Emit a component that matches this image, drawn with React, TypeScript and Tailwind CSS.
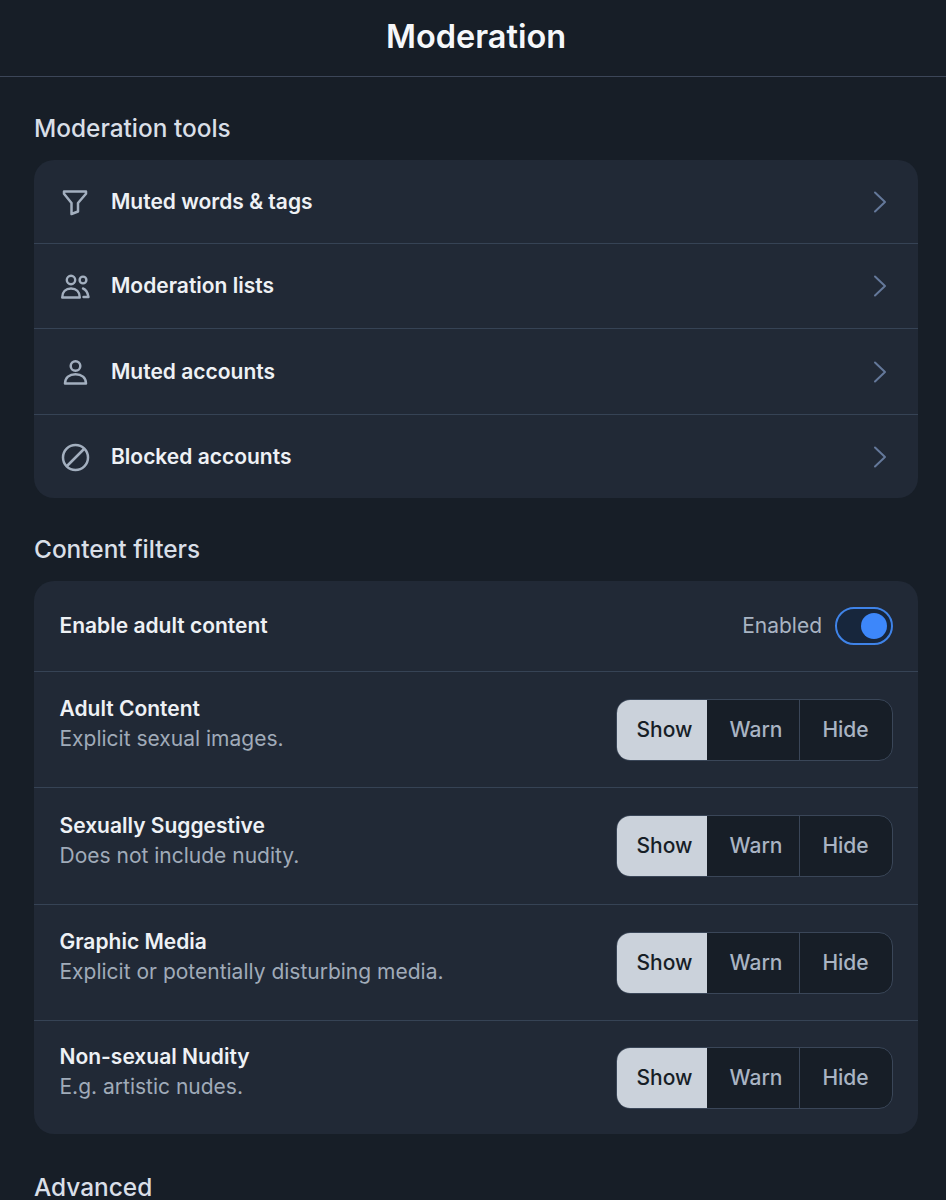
const font = "font-['Inter',sans-serif]";

function FilterIcon() {
  return (
    <svg viewBox="0 0 30 30" className="w-[30px] h-[30px]" fill="none" stroke="#a3afbf" strokeWidth="2.5" strokeLinejoin="round">
      <path d="M4 4.500h22v2.200l-8 9.300v8.500l-6.500 2.500V16L4 6.700z" />
    </svg>
  );
}

function UsersIcon() {
  return (
    <svg viewBox="0 0 30 30" className="w-[30px] h-[30px]" fill="none" stroke="#a3afbf" strokeWidth="2.4" strokeLinejoin="round" strokeLinecap="round">
      <circle cx="11" cy="9" r="4.200" />
      <circle cx="23" cy="9" r="3.400" />
      <path d="M2.200 26.500c0-5.600 3.600-9 8.800-9s8.800 3.400 8.800 9z" />
      <path d="M23 17.500c3 1 4.800 4.500 5.500 8.500h-5" />
    </svg>
  );
}

function PersonIcon() {
  return (
    <svg viewBox="0 0 30 30" className="w-[30px] h-[30px]" fill="none" stroke="#a3afbf" strokeWidth="2.500" strokeLinejoin="round">
      <circle cx="15.500" cy="9" r="4.800" />
      <path d="M5 26.500c0-5.800 4.400-9.300 10.500-9.300s10.500 3.500 10.500 9.300z" />
    </svg>
  );
}

function BlockIcon() {
  return (
    <svg viewBox="0 0 30 30" className="w-[30px] h-[30px]" fill="none" stroke="#a3afbf" strokeWidth="2.500" strokeLinecap="round">
      <circle cx="15.500" cy="15.500" r="12.500" />
      <path d="M7 24L24 7" />
    </svg>
  );
}

function Chevron() {
  return (
    <svg viewBox="0 0 16 24" className="w-4 h-6" fill="none" stroke="#64789a" strokeWidth="2" strokeLinecap="round" strokeLinejoin="round">
      <path d="M3 2.500l10 9.500L3 21.500" />
    </svg>
  );
}

const tools = [
  { label: 'Muted words & tags', icon: <FilterIcon />, h: 'h-[83px]' },
  { label: 'Moderation lists', icon: <UsersIcon />, h: 'h-[85px]' },
  { label: 'Muted accounts', icon: <PersonIcon />, h: 'h-[86px]' },
  { label: 'Blocked accounts', icon: <BlockIcon />, h: 'h-[84px]' },
];

const filters = [
  { title: 'Adult Content', desc: 'Explicit sexual images.', h: 'h-[116px]' },
  { title: 'Sexually Suggestive', desc: 'Does not include nudity.', h: 'h-[117px]' },
  { title: 'Graphic Media', desc: 'Explicit or potentially disturbing media.', h: 'h-[116px]' },
  { title: 'Non-sexual Nudity', desc: 'E.g. artistic nudes.', h: 'h-[114px]' },
];

function Segmented() {
  return (
    <div className="flex h-[62px] w-[277px] overflow-hidden rounded-[14px] border border-[#3a4658] bg-[#171e27] text-[21px] font-medium text-[#a9b4c3]">
      <div className="flex w-[90px] items-center justify-center bg-[#cbd2db] pl-[5px] text-[#171e27]">Show</div>
      <div className="flex w-[92px] items-center justify-center border-l border-[#171e27] pl-[5px]">Warn</div>
      <div className="flex flex-1 items-center justify-center border-l border-[#3a4658] pr-[1px]">Hide</div>
    </div>
  );
}

export default function App() {
  return (
    <div className={`${font} h-[1200px] overflow-hidden bg-[#171e27] text-white`}>
      <header className="flex h-[77px] items-center justify-center border-b border-[#3c4658] pb-[2px] pl-[6px] text-[32.500px] font-semibold text-[#f5f7fa]">
        Moderation
      </header>

      <div className="pl-[34px] pr-[28px]">
        <h2 className="flex h-[83px] items-end pb-[16px] text-[24.400px] font-medium leading-8 text-[#d9dfe7]">Moderation tools</h2>
        <div className="overflow-hidden rounded-[20px] bg-[#212936]">
          {tools.map((t, i) => (
            <div key={t.label} className={`${t.h} flex items-center pl-[26px] pr-[30px] ${i > 0 ? 'border-t border-[#364355]' : ''}`}>
              <span className="mr-[21px] flex w-[30px] justify-center">{t.icon}</span>
              <span className="flex-1 text-[21px] font-semibold text-[#eef1f5]">{t.label}</span>
              <Chevron />
            </div>
          ))}
        </div>

        <h2 className="flex h-[83px] items-end pb-[16px] text-[24.400px] font-medium leading-8 text-[#d9dfe7]">Content filters</h2>
        <div className="overflow-hidden rounded-[20px] bg-[#212936]">
          <div className="flex h-[90px] items-center justify-between pl-[25.500px] pr-[25px]">
            <span className="text-[21px] font-semibold text-[#eef1f5]">Enable adult content</span>
            <div className="flex items-center gap-[13px]">
              <span className="text-[21px] text-[#a9b4c3]">Enabled</span>
              <div className="flex h-[38px] w-[58px] items-center justify-end rounded-full border-2 border-[#3f83e8] bg-[#17263c] pr-[4px]">
                <div className="h-[26px] w-[26px] rounded-full bg-[#3d87fa]" />
              </div>
            </div>
          </div>
          {filters.map((f) => (
            <div key={f.title} className={`${f.h} flex items-center justify-between border-t border-[#364355] pl-[25.500px] pr-[25px]`}>
              <div className="mb-[11px]">
                <div className="text-[21px] font-semibold leading-[30px] text-[#eef1f5]">{f.title}</div>
                <div className="text-[21px] leading-[30px] text-[#a0abb9]">{f.desc}</div>
              </div>
              <Segmented />
            </div>
          ))}
        </div>

        <h2 className="flex h-[69px] items-end text-[24.400px] font-medium leading-8 text-[#d9dfe7]">Advanced</h2>
      </div>
    </div>
  );
}
